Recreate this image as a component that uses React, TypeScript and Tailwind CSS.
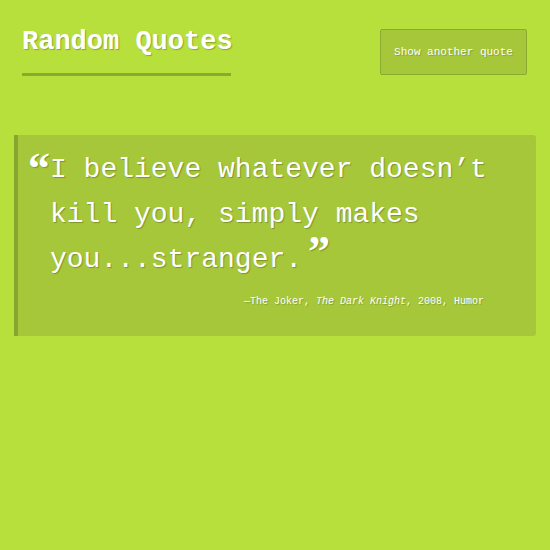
import React from "react";

const mono = { fontFamily: '"Liberation Mono", "Courier New", monospace' };
const serif = { fontFamily: '"Liberation Serif", Georgia, serif' };

const App: React.FC = () => {
  return (
    <div className="min-h-[550px] w-[550px] bg-[#b8e03c] text-white" style={mono}>
      {/* Header */}
      <header className="flex items-start justify-between pl-[22px] pr-[23px] pt-[24px]">
        <div className="w-[209px]">
          <h1 className="text-[27px] font-bold leading-[36px] whitespace-nowrap [text-shadow:1px_1px_1px_rgba(0,0,0,0.25)]">
            Random Quotes
          </h1>
          <div className="mt-[13px] h-[3px] bg-[#8aac2e]" />
        </div>
        <button className="mt-[5px] h-[46px] w-[147px] rounded-[2px] border border-[#8aab2e] bg-[#a7c73a] text-[11px] text-white [text-shadow:1px_1px_1px_rgba(0,0,0,0.2)]">
          Show another quote
        </button>
      </header>

      {/* Quote card */}
      <section className="mx-[14px] mt-[59px] h-[201px] rounded-r-[3px] border-l-4 border-[#86a630] bg-[#a7c73a] pl-[10px] pr-[16px] pt-[12px]">
        <blockquote className="flex [text-shadow:1px_1px_1px_rgba(0,0,0,0.25)]">
          <span className="w-[22px] shrink-0 text-[44px] font-bold leading-[44px]" style={serif}>
            &ldquo;
          </span>
          <p className="w-[470px] text-[28px] leading-[45px]">
            I believe whatever doesn&rsquo;t kill you, simply makes you...stranger.
            <span className="ml-[6px] align-top text-[44px] font-bold leading-[30px]" style={serif}>
              &rdquo;
            </span>
          </p>
        </blockquote>
        <p className="mt-[12px] pr-[36px] text-right text-[10px] [text-shadow:1px_1px_1px_rgba(0,0,0,0.2)]">
          &mdash;The Joker, <i>The Dark Knight</i>, 2008, Humor
        </p>
      </section>
    </div>
  );
};

export default App;
